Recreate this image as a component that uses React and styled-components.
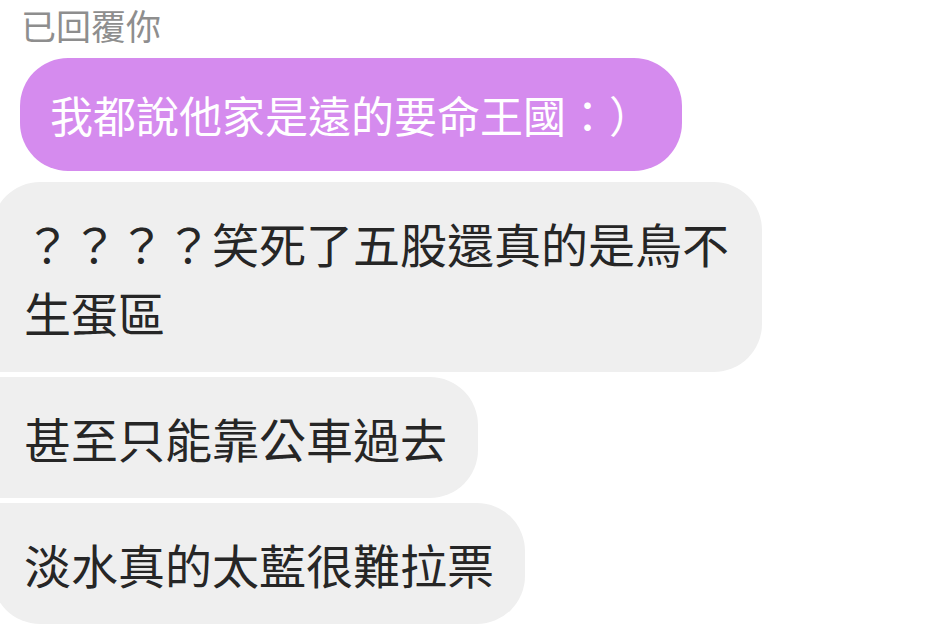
import React from 'react';
import styled, { createGlobalStyle } from 'styled-components';

const GlobalStyle = createGlobalStyle`
  html, body {
    margin: 0;
    padding: 0;
    background: #ffffff;
  }
  body {
    font-family: "Noto Sans CJK TC", "Noto Sans", sans-serif;
    overflow: hidden;
  }
`;

const Thread = styled.div`
  width: 926px;
  height: 628px;
  display: flex;
  flex-direction: column;
  align-items: flex-start;
  overflow: hidden;
`;

const ReplyLabel = styled.div`
  margin-left: 21px;
  font-size: 35px;
  line-height: 50px;
  color: #8e8e8e;
`;

const QuoteBubble = styled.div`
  margin: 8px 0 0 20px;
  padding: 26px 30px;
  border-radius: 48px;
  background: #d58bee;
  color: #ffffff;
  font-size: 43px;
  line-height: 61px;
  white-space: nowrap;
`;

const Group = styled.div`
  margin-top: 11px;
  margin-left: -8px;
  display: flex;
  flex-direction: column;
  align-items: flex-start;
  gap: 5px;
`;

const Bubble = styled.div`
  box-sizing: border-box;
  max-width: 770px;
  padding: 26px 31px 26px 32px;
  background: #efefef;
  color: #262626;
  font-size: 47px;
  line-height: 69px;
  border-radius: ${({ $first, $last }) =>
    `${$first ? 48 : 8}px 48px 48px ${$last ? 48 : 8}px`};
`;

const messages = [
  '？？？？笑死了五股還真的是鳥不生蛋區',
  '甚至只能靠公車過去',
  '淡水真的太藍很難拉票',
];

const App = () => {
  return (
    <>
      <GlobalStyle />
      <Thread>
        <ReplyLabel>已回覆你</ReplyLabel>
        <QuoteBubble>我都說他家是遠的要命王國：）</QuoteBubble>
        <Group>
          {messages.map((text, i) => (
            <Bubble key={i} $first={i === 0} $last={i === messages.length - 1}>
              {text}
            </Bubble>
          ))}
        </Group>
      </Thread>
    </>
  );
};

export default App;
